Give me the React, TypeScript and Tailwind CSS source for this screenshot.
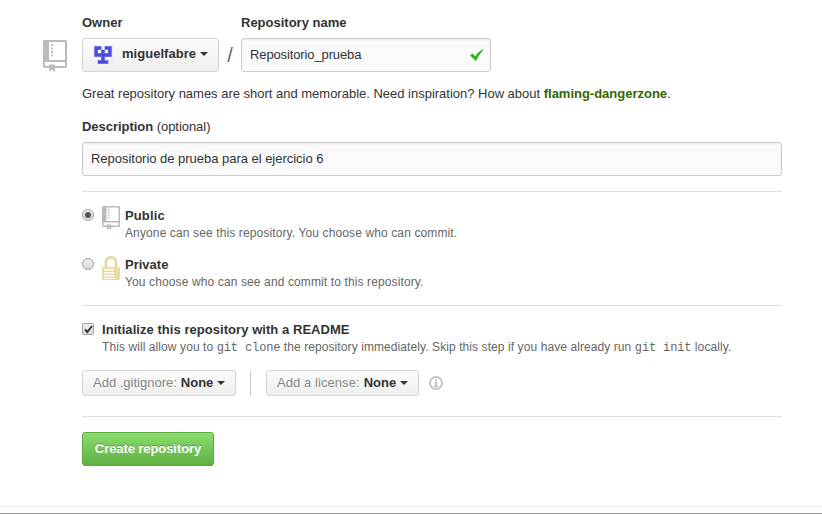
import React from "react";

function RepoIcon({ className }: { className: string }) {
  return (
    <svg className={className} viewBox="0 0 24 32" fill="#bbb">
      <path
        fillRule="evenodd"
        d="M1.5 0H22.5Q24 0 24 1.5V26.500Q24 28 22.500 28H12V32L9.250 29.600L6.500 32V28H2Q0 28 0 26V1.500Q0 0 1.500 0ZM6 2V20H22V2ZM2 22V26H6V24.500H12V26H22V22Z"
      />
      <path d="M8 4h2v2H8zM8 7.500h2v2H8zM8 11h2v2H8zM8 14.500h2v2H8z" />
    </svg>
  );
}

function LockIcon() {
  return (
    <svg className="h-6 w-[18px]" viewBox="0 0 18 24" fill="#e9dba5">
      <path
        fillRule="evenodd"
        d="M1 11H2.500V6.500C2.500 2.500 5.300 0 9 0S15.500 2.500 15.500 6.500V11H17Q18 11 18 12V22.500Q18 24 16.500 24H1.500Q0 24 0 22.500V12Q0 11 1 11ZM5.500 11H12.500V6.500C12.500 4.300 11 3 9 3S5.500 4.300 5.500 6.500ZM2 13V14.500H12V13ZM2 16V17.500H12V16ZM2 19V20.500H12V19ZM2 22V23H12V22Z"
      />
    </svg>
  );
}

function Caret({ className = "" }: { className?: string }) {
  return (
    <svg className={`ml-1 h-1 w-2 ${className}`} viewBox="0 0 8 4" fill="#333">
      <path d="M0 0H8L4 4Z" />
    </svg>
  );
}

function Avatar() {
  return (
    <svg className="h-5 w-5" viewBox="0 0 20 20">
      <path fill="#f0f0f0" d="M0 0h20v20H0z" />
      <path
        transform="translate(1.300 1.300) scale(3.480)"
        fill="#4c4cdc"
        fillRule="evenodd"
        d="M0 0H2V1H3V0H5V3H3V4H4V5H1V4H2V3H0ZM1 1V2H2V1ZM3 1V2H4V1Z"
      />
    </svg>
  );
}

const button =
  "flex items-center rounded-[3px] border border-[#d5d5d5] bg-linear-to-b from-[#fcfcfc] to-[#eee]";
const field =
  "flex h-[34px] items-center rounded-[3px] border border-[#ccc] bg-[#fafafa] px-2 shadow-[inset_0_1px_2px_rgba(0,0,0,0.075)]";
const note = "block text-[12px] leading-4 whitespace-nowrap text-[#666]";

function Radio({ checked }: { checked?: boolean }) {
  return (
    <span className="mt-[3px] flex h-3 w-3 items-center justify-center rounded-full border border-[#a3a3a3] bg-linear-to-b from-[#eee] to-[#dcdcdc]">
      {checked && <span className="h-1.5 w-1.5 rounded-full bg-[#555]" />}
    </span>
  );
}

function Code({ children }: { children: React.ReactNode }) {
  return (
    <code className="font-['Liberation_Mono',monospace] text-[12px] tracking-[-0.12px]">
      {children}
    </code>
  );
}

export default function App() {
  return (
    <div className="h-[514px] w-[822px] overflow-hidden bg-white font-['Liberation_Sans',Arial,sans-serif] text-[13px] leading-[18px] text-[#333]">
      <div className="flex h-[506px] pl-[43px]">
        <RepoIcon className="mt-10 h-8 w-6 shrink-0" />
        <main className="ml-[15px] w-[700px] pt-[14px]">
          <div className="flex font-bold">
            <span className="w-[159px]">Owner</span>
            <span>Repository name</span>
          </div>
          <div className="mt-1.5 flex">
            <button className={`${button} h-[34px] w-[137px] pl-[10px]`}>
              <Avatar />
              <b className="ml-[9px] -mt-[3px] tracking-[0.03px]">miguelfabre</b>
              <Caret className="mb-[2px]" />
            </button>
            <span className="w-[22px] pt-2 text-center text-[20px] text-[#666]">/</span>
            <div className={`${field} w-[250px] justify-between`}>
              <span className="tracking-[-0.12px]">Repositorio_prueba</span>
              <svg className="-mr-[2px] h-3 w-[14px]" viewBox="0 0 14 12" fill="#1ebc13">
                <path d="M0 6.500L2.500 4.600L5.200 7.200C7.400 4 10 1.500 14 0C10.900 3.500 8.300 7 5.900 12Z" />
              </svg>
            </div>
          </div>
          <p className="mt-[13px] tracking-[-0.01px]">
            Great repository names are short and memorable. Need inspiration? How about{" "}
            <b className="text-[#336600]">flaming-dangerzone</b>.
          </p>
          <p className="mt-[15px] tracking-[-0.04px]">
            <b>Description</b> (optional)
          </p>
          <div className={`${field} mt-1.5 tracking-[-0.025px]`}>
            Repositorio de prueba para el ejercicio 6
          </div>

          <section className="mt-[15px] h-[114px] border-t border-[#ddd] pt-[14px]">
            <div className="flex h-[49px]">
              <Radio checked />
              <RepoIcon className="ml-2 h-6 w-[18px]" />
              <div className="ml-[5px] pt-px">
                <b className="block tracking-[0.12px]">Public</b>
                <span className={`${note} tracking-[0.12px]`}>
                  Anyone can see this repository. You choose who can commit.
                </span>
              </div>
            </div>
            <div className="flex h-[49px]">
              <Radio />
              <span className="ml-2 pt-px"><LockIcon /></span>
              <div className="ml-[5px] pt-px">
                <b className="block">Private</b>
                <span className={`${note} tracking-[0.12px]`}>
                  You choose who can see and commit to this repository.
                </span>
              </div>
            </div>
          </section>

          <section className="h-[111px] border-t border-[#ddd] pt-[14px]">
            <div className="flex">
              <span className="mt-[3px] flex h-3 w-3 items-center justify-center rounded-[2px] border border-[#a3a3a3] bg-linear-to-b from-[#eee] to-[#dcdcdc]">
                <svg className="h-[9px] w-[9px] shrink-0" viewBox="0 0 9 9" fill="none" stroke="#333" strokeWidth="2">
                  <path d="M1 4.500L3.300 7L8 1" />
                </svg>
              </span>
              <div className="ml-2 pt-px">
                <b className="block tracking-[0.05px]">Initialize this repository with a README</b>
                <span className={`${note} tracking-[0.085px]`}>
                  This will allow you to <Code>git clone</Code> the repository immediately. Skip this
                  step if you have already run <Code>git init</Code> locally.
                </span>
              </div>
            </div>
            <div className="mt-[14px] flex items-center">
              <button className={`${button} h-[26px] w-[154px] pl-[10px]`}>
                <span className="text-[#888]">Add .gitignore:</span>
                <b className="ml-1">None</b>
                <Caret />
              </button>
              <span className="ml-[14px] h-[26px] w-px bg-[#ccc]" />
              <button className={`${button} ml-[15px] h-[26px] w-[153px] pl-[10px]`}>
                <span className="tracking-[0.07px] text-[#888]">Add a license:</span>
                <b className="ml-1">None</b>
                <Caret />
              </button>
              <svg className="ml-[10px] h-[14px] w-[14px]" viewBox="0 0 14 14" fill="#c4c4c4">
                <circle cx="7" cy="7" r="6" fill="none" stroke="#c4c4c4" strokeWidth="2" />
                <path d="M6 3H8V5H6ZM5 6H8V9.500H9V11H5V9.500H6V7.300H5Z" />
              </svg>
            </div>
          </section>

          <section className="border-t border-[#ddd] pt-[15px]">
            <button className="flex h-[34px] w-[132px] items-center justify-center rounded-[3px] border border-[#5ca941] bg-linear-to-b from-[#8add6d] to-[#60b044] font-bold tracking-[-0.08px] text-white text-shadow-[0_-1px_0_rgba(0,0,0,0.25)]">
              Create repository
            </button>
          </section>
        </main>
      </div>
      <div className="h-[7px] border-t border-[#eee]" />
      <div className="h-px bg-[#999]" />
    </div>
  );
}
